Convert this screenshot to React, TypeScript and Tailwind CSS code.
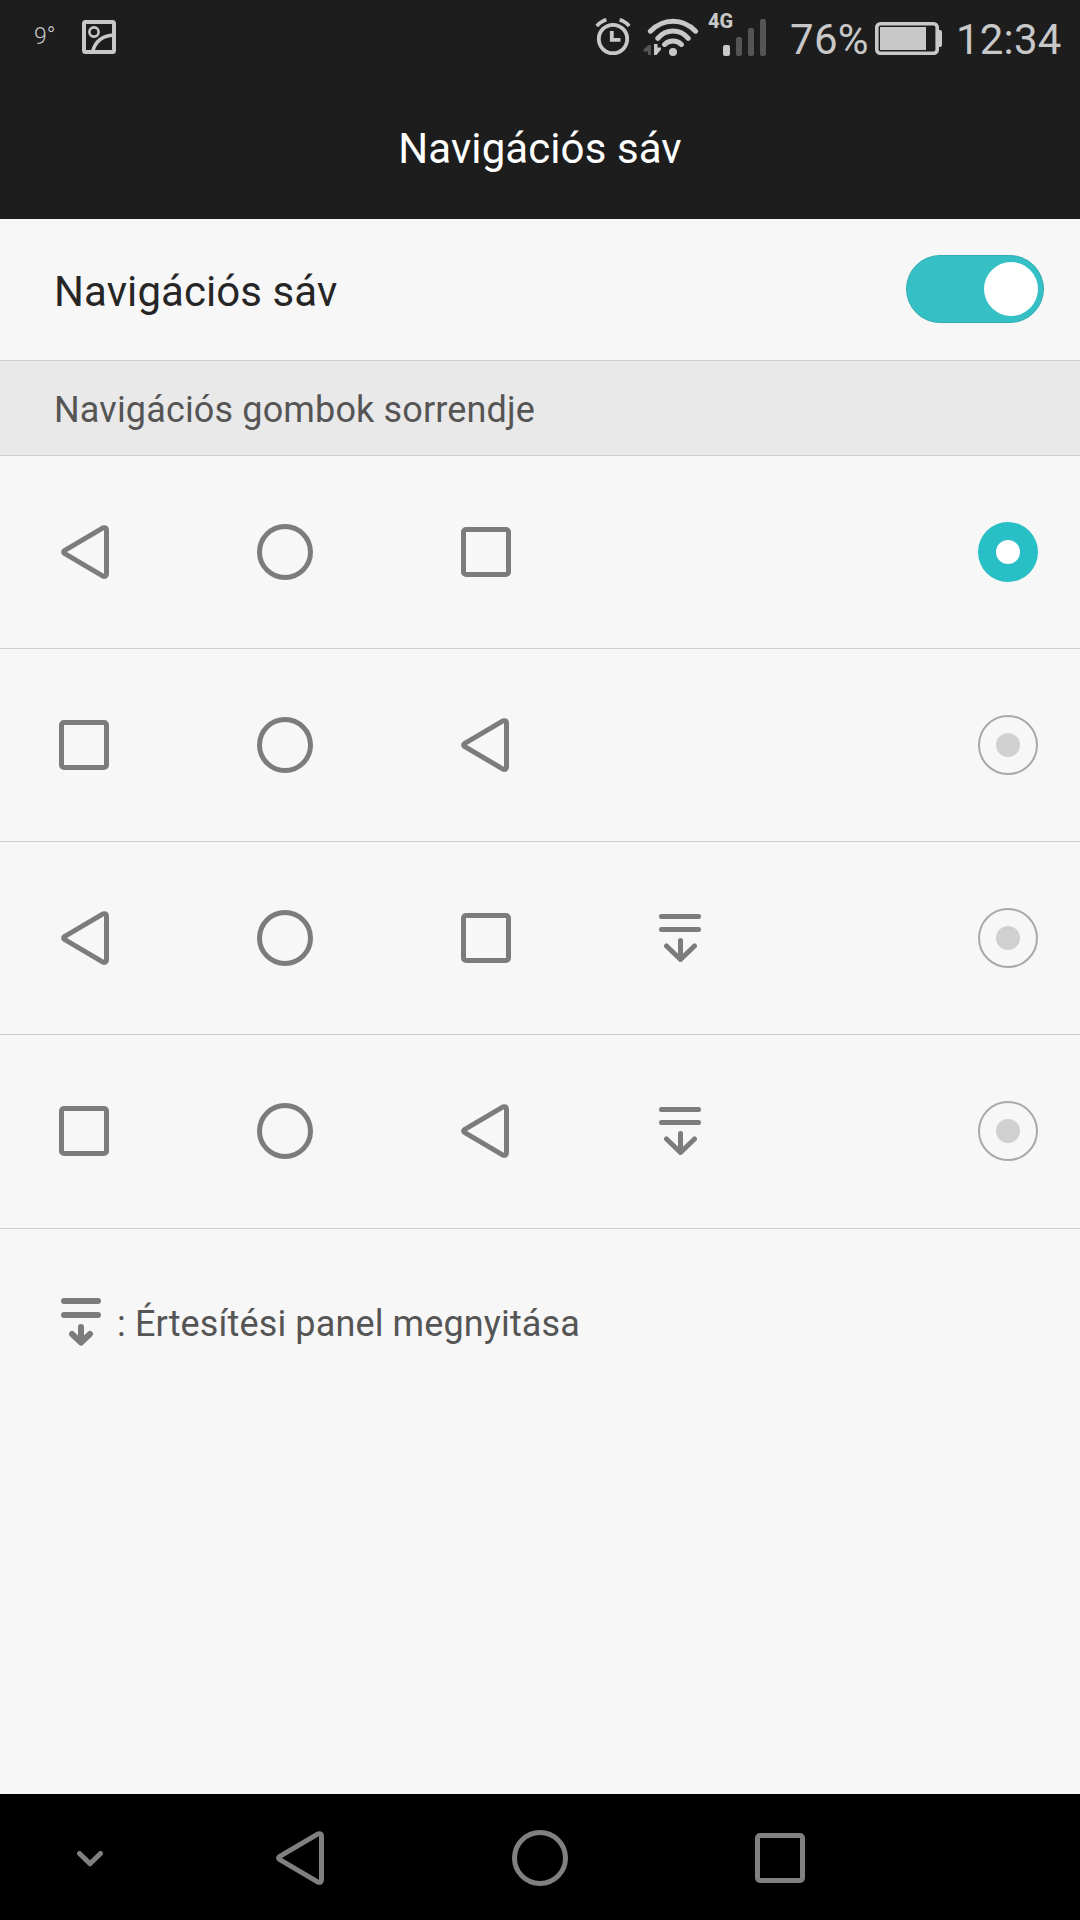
import { useState } from "react"

type IconName = "back" | "home" | "recent" | "panel"

const layouts: { id: number; icons: IconName[] }[] = [
  { id: 1, icons: ["back", "home", "recent"] },
  { id: 2, icons: ["recent", "home", "back"] },
  { id: 3, icons: ["back", "home", "recent", "panel"] },
  { id: 4, icons: ["recent", "home", "back", "panel"] },
]

function BackIcon() {
  return (
    <svg width="48" height="54" viewBox="0 0 48 54" fill="none" stroke="currentColor" strokeWidth="5" strokeLinejoin="round">
      <path d="M42 2.9 L3.4 25.6 Q1.8 27 3.4 28.4 L42 51.1 Q45.5 52 45.5 49 V5 Q45.5 2 42 2.9 Z" />
    </svg>
  )
}

function HomeIcon() {
  return (
    <svg width="56" height="56" viewBox="0 0 56 56" fill="none" stroke="currentColor" strokeWidth="5">
      <circle cx="28" cy="28" r="25.5" />
    </svg>
  )
}

function RecentIcon() {
  return (
    <svg width="50" height="50" viewBox="0 0 50 50" fill="none" stroke="currentColor" strokeWidth="5">
      <rect x="2.5" y="2.5" width="45" height="45" rx="2.5" />
    </svg>
  )
}

function PanelIcon() {
  return (
    <svg width="42" height="48" viewBox="0 0 42 48" fill="none" stroke="currentColor" strokeWidth="5" strokeLinecap="round" strokeLinejoin="round">
      <path d="M2.5 2.5 H39.5 M2.5 15.5 H39.5 M21.5 26.5 V45 M7.5 32 L21.5 45.5 L35.5 32" />
    </svg>
  )
}

function PanelIconBold() {
  return (
    <svg width="40" height="48" viewBox="0 0 40 48" fill="none" stroke="currentColor" strokeWidth="6" strokeLinecap="round" strokeLinejoin="round">
      <path d="M3 3 H37 M3 17 H37 M20 29 V44 M11 36 L20 44.5 L29 36" />
    </svg>
  )
}

const icons = {
  back: <BackIcon />,
  home: <HomeIcon />,
  recent: <RecentIcon />,
  panel: <PanelIcon />,
}

function StatusBar() {
  return (
    <div className="flex h-[74px] items-start text-[#c8c8c8]">
      <span className="ml-[34px] mt-[23px] w-[24px] text-[23px] leading-[28px] font-light">9°</span>
      <svg className="ml-[24px] mt-[20px]" width="34" height="34" viewBox="0 0 34 34" fill="none" stroke="currentColor">
        <rect x="2" y="2" width="30" height="30" rx="1.5" strokeWidth="4" />
        <circle cx="12" cy="12" r="4.6" strokeWidth="2.6" />
        <path d="M10.5 32 C13 22 20 15.5 32 15" strokeWidth="3.6" />
      </svg>

      {/* alarm */}
      <svg className="ml-[479px] mt-[17px]" width="36" height="39" viewBox="0 0 36 39" fill="none" stroke="currentColor">
        <circle cx="18" cy="22" r="14.2" strokeWidth="3.8" />
        <path d="M16.8 14 V22.9 H25.5" strokeWidth="3.8" />
        <path d="M1.8 9.2 Q5.5 4.4 11.4 2.8 M34.2 9.2 Q30.5 4.4 24.6 2.8" strokeWidth="3.6" />
      </svg>

      {/* wifi with traffic arrows */}
      <svg className="ml-[12px] mt-[18px]" width="56" height="39" viewBox="0 0 56 39" fill="none">
        <path d="M8 27 V37 H5 V33.5 H0.5 V31.5 L5.5 27 Z" fill="#555555" />
        <path d="M11 26 H14.5 V29.5 H18 V31.5 L13.5 37 H11 Z" fill="currentColor" />
        <path
          d="M7.4 13.2 Q17 3.2 30 3.2 T52.6 13.2 M14.8 20.3 Q21 13 30 13 T45.2 20.3 M21.6 26.4 Q25 23 30 23 T38.4 26.4"
          stroke="currentColor"
          strokeWidth="5"
          strokeLinecap="round"
        />
        <circle cx="30" cy="34" r="4" fill="currentColor" />
      </svg>

      {/* mobile signal */}
      <div className="relative ml-[24px] mt-[19px]">
        <svg width="43" height="37" viewBox="0 0 43 37">
          <rect x="0" y="26" width="7" height="11" rx="2" fill="#c8c8c8" />
          <rect x="13" y="18" width="6" height="19" rx="2" fill="#555555" />
          <rect x="25" y="9" width="6" height="28" rx="2" fill="#555555" />
          <rect x="37" y="0" width="6" height="37" rx="2" fill="#555555" />
        </svg>
        <span className="absolute -left-[15px] -top-[10px] text-[20px] leading-[24px] font-extrabold">4G</span>
      </div>

      <span className="ml-[24px] mt-[15px] w-[85px] text-[42px] leading-[49px] tracking-[0.3px]">76%</span>
      <svg className="mt-[22px]" width="67" height="33" viewBox="0 0 67 33" fill="none">
        <rect x="1.8" y="1.8" width="60.4" height="29.4" rx="3.5" stroke="currentColor" strokeWidth="3.6" />
        <rect x="5" y="5" width="46" height="23" fill="currentColor" />
        <path d="M63 8 H65 Q67 8 67 10 V23 Q67 25 65 25 H63 Z" fill="currentColor" />
      </svg>
      <span className="ml-[14px] mt-[15px] text-[42px] leading-[49px] tracking-[0.2px]">12:34</span>
    </div>
  )
}

function Radio({ checked }: { checked: boolean }) {
  return checked ? (
    <span className="flex size-[60px] items-center justify-center rounded-full bg-[#29bfc7]">
      <span className="size-6 rounded-full bg-white" />
    </span>
  ) : (
    <span className="flex size-[60px] items-center justify-center rounded-full border-2 border-[#a9a9a9]">
      <span className="size-6 rounded-full bg-[#d0d0d0]" />
    </span>
  )
}

export default function App() {
  const [enabled, setEnabled] = useState(true)
  const [selected, setSelected] = useState(1)

  return (
    <div className="flex h-[1920px] w-[1080px] flex-col overflow-hidden bg-[#f7f7f7] font-['Roboto',sans-serif]">
      <header className="h-[219px] bg-[#1d1d1d]">
        <StatusBar />
        <h1 className="pt-[50px] text-center text-[42px] leading-[49px] tracking-[0.08px] text-white">Navigációs sáv</h1>
      </header>

      <main className="flex-1">
        <div className="flex h-[142px] items-center justify-between border-b border-[#cfcfcf] pr-[36px] pb-[1px] pl-[54px]">
          <span className="pt-[4px] text-[42px] leading-[49px] tracking-[0.08px] text-[#262626]">Navigációs sáv</span>
          <button
            onClick={() => setEnabled(!enabled)}
            className={
              enabled
                ? "flex h-[68px] w-[138px] items-center justify-end rounded-full border border-[#33adb3] bg-[#35c0c6] px-[5px]"
                : "flex h-[68px] w-[138px] items-center justify-start rounded-full border border-[#a9a9a9] bg-[#d0d0d0] px-[5px]"
            }
          >
            <span className="size-[54px] rounded-full bg-white" />
          </button>
        </div>

        <h2 className="h-[95px] border-b border-[#cfcfcf] bg-[#e9e9e9] pt-[28px] pl-[54px] text-[36px] leading-[42px] tracking-[0.15px] text-[#555555]">
          Navigációs gombok sorrendje
        </h2>

        {layouts.map((item) => (
          <div
            key={item.id}
            onClick={() => setSelected(item.id)}
            className="flex h-[193px] items-center justify-between border-b border-[#cfcfcf] pr-[42px] pl-[59px] text-[#7c7c7c] last-of-type:h-[194px] last-of-type:pb-[2px]"
          >
            <div className="grid grid-cols-[50px_56px_50px_42px] items-center gap-x-[148px]">
              {item.icons.map((name, index) => (
                <span key={name} className={index === 0 ? "flex justify-end" : "flex justify-start"}>
                  {icons[name]}
                </span>
              ))}
            </div>
            <Radio checked={selected === item.id} />
          </div>
        ))}

        <p className="flex items-start pt-[69px] pl-[61px] text-[36px] leading-[42px] tracking-[0.13px] text-[#555555]">
          <span className="text-[#7c7c7c]">
            <PanelIconBold />
          </span>
          <span className="ml-[16px] pt-[5px]">: Értesítési panel megnyitása</span>
        </p>
      </main>

      <nav className="flex h-[126px] items-center bg-black pt-[2px] pl-[77px] text-[#808080]">
        <svg className="mt-[1px]" width="26" height="16" viewBox="0 0 26 16" fill="none" stroke="currentColor" strokeWidth="5" strokeLinecap="round" strokeLinejoin="round">
          <path d="M2.5 2.5 L13 12.8 L23.5 2.5" />
        </svg>
        <span className="ml-[173px]">
          <BackIcon />
        </span>
        <span className="ml-[188px]">
          <HomeIcon />
        </span>
        <span className="ml-[187px]">
          <RecentIcon />
        </span>
      </nav>
    </div>
  )
}
